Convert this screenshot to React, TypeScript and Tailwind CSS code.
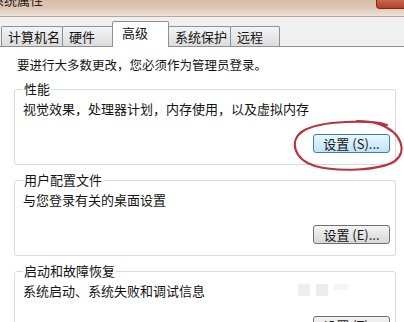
import React from "react";

const tabs = [
   { label: "计算机名", w: "w-[62px]" },
   { label: "硬件", w: "w-[51px]" },
   { label: "高级", w: "w-[57px]", active: true },
   { label: "系统保护", w: "w-[63px]" },
   { label: "远程", w: "w-[50px]" },
];

const groups = [
   { title: "性能", desc: "视觉效果，处理器计划，内存使用，以及虚拟内存", button: "设置 (S)...", focused: true },
   { title: "用户配置文件", desc: "与您登录有关的桌面设置", button: "设置 (E)..." },
   { title: "启动和故障恢复", desc: "系统启动、系统失败和调试信息", button: "设置 (T)..." },
];

export default function App() {
   return (
      <div
         className="relative w-[404px] h-[322px] overflow-hidden bg-white text-[#141414]"
         style={{ fontFamily: '"Noto Sans CJK SC", "Noto Sans", sans-serif' }}
      >
         {/* Title bar (cropped) */}
         <div className="h-[17px] flex justify-between bg-gradient-to-b from-[#d7bda7] via-[#dfc8b5] to-[#efe3d8] border-b border-[#b9a698]">
            <div className="-ml-[9px] -mt-[8px] text-[13px] leading-[15px] text-[#2a2018]">系统属性</div>
            <div className="w-[30px] h-[9px] mr-[-2px] rounded-bl-[4px] border border-t-0 border-[#7a2a1c] bg-gradient-to-b from-[#c9674d] to-[#b2412a]" />
         </div>

         {/* Tab strip */}
         <div className="h-[30px] flex items-end pl-[1px] bg-[#f0f0f0] border-b border-[#8d9096]">
            {tabs.map((t, i) =>
               t.active ? (
                  <div
                     key={t.label}
                     className={`${t.w} -ml-px -mb-px h-[26px] relative z-10 bg-white border border-b-0 border-[#8d9096] rounded-t-[2px] pl-[9px] pt-[3px] text-[13px] leading-[15px]`}
                  >
                     {t.label}
                  </div>
               ) : (
                  <div
                     key={t.label}
                     className={`${t.w} ${i > 0 ? "-ml-px" : ""} h-[20px] bg-gradient-to-b from-[#f4f4f4] to-[#dcdcdc] border border-b-0 border-[#8d9096] rounded-t-[2px] pl-[6px] pt-[2px] text-[13px] leading-[15px]`}
                  >
                     {t.label}
                  </div>
               )
            )}
         </div>

         {/* Content */}
         <div className="pt-[10px] bg-white">
            <div className="pl-[17px] text-[12.5px] leading-[15px]">要进行大多数更改，您必须作为管理员登录。</div>
            <div className="flex flex-col gap-[8px] mt-[10px] ml-[14px] mr-[8px]">
               {groups.map(g => (
                  <fieldset key={g.title} className="border border-[#d5dbe0] rounded-[3px] pl-[8px] pr-[5px] pb-[11px]">
                     <legend className="px-[1px] text-[13px] leading-[14px]">{g.title}</legend>
                     <div className="pt-[5px] text-[13px] leading-[15px]">{g.desc}</div>
                     <div className="flex justify-end mt-[18px]">
                        <button
                           className={`w-[77px] h-[19px] rounded-[3px] border text-[13px] leading-[15px] whitespace-nowrap ${
                              g.focused
                                 ? "border-[#3c7fb1] bg-gradient-to-b from-[#eaf6fd] to-[#bde4f8]"
                                 : "border-[#707070] bg-gradient-to-b from-[#f4f4f4] to-[#d8d8d8]"
                           }`}
                        >
                           {g.button}
                        </button>
                     </div>
                  </fieldset>
               ))}
            </div>
         </div>

         {/* Red annotation ellipse */}
         <svg className="absolute left-[291px] top-[119px]" width="113" height="53" viewBox="0 0 113 53">
            <path
               d="M 96 6 C 80 1, 30 1, 12 12 C -2 21, 2 40, 24 47 C 46 53, 88 52, 104 42 C 116 33, 112 14, 88 5 C 82 3, 74 2, 66 2"
               fill="none"
               stroke="#b8333d"
               strokeWidth="2.2"
               strokeLinecap="round"
            />
         </svg>

         {/* faint watermark */}
         <div className="absolute left-[298px] top-[284px] flex gap-[6px] opacity-60">
            <div className="w-[12px] h-[12px] bg-[#e6e6e6]" />
            <div className="w-[12px] h-[12px] bg-[#e0e0e0]" />
            <div className="w-[14px] h-[6px] bg-[#efefef]" />
         </div>
      </div>
   );
}
